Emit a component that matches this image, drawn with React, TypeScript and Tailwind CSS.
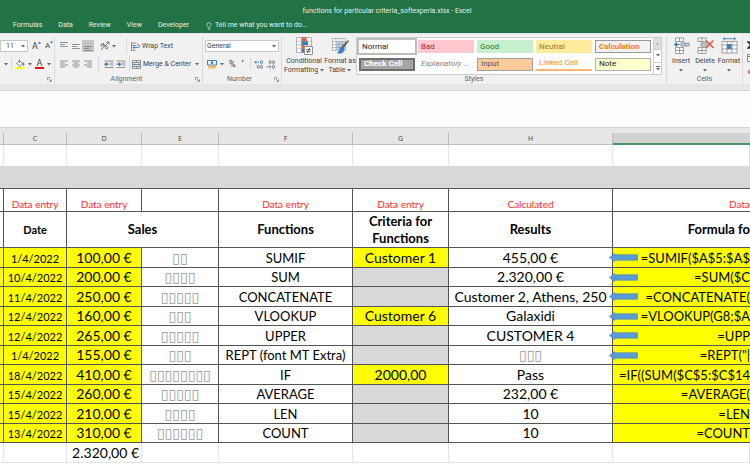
import type { ReactNode } from "react";
import clsx from "clsx";
import { Lightbulb } from "lucide-react";

interface Row {
    date: string;
    amount: string;
    bars: number;
    fn: string;
    criteria?: string;
    result: string;
    formula: string;
    arrow?: boolean;
}

const tabs = ["Formulas", "Data", "Review", "View", "Developer"];

const cellStyles = [
    { name: "Normal", className: "bg-white text-[#222] outline-2 outline-[#bdbdbd]" },
    { name: "Bad", className: "bg-[#ffc7ce] text-[#b3202c]" },
    { name: "Good", className: "bg-[#c6efce] text-[#2a7a2a]" },
    { name: "Neutral", className: "bg-[#ffeb9c] text-[#a5741a]" },
    { name: "Calculation", className: "bg-[#f2f2f2] text-[#fa7d00] font-bold border border-[#999]" },
    { name: "Check Cell", className: "bg-[#a5a5a5] text-white font-bold border-2 border-[#6e6e6e]" },
    { name: "Explanatory ...", className: "bg-white text-[#7f7f7f] italic" },
    { name: "Input", className: "bg-[#ffcc99] text-[#4f4f76] border border-[#a0a0a0]" },
    { name: "Linked Cell", className: "bg-white text-[#fa8d20] border-b-2 border-[#ffb571]" },
    { name: "Note", className: "bg-[#ffffcc] text-[#222] border border-[#b2b2b2]" },
];

const rows: Row[] = [
    { date: "1/4/2022", amount: "100,00 €", bars: 2, fn: "SUMIF", criteria: "Customer 1", result: "455,00 €", formula: "=SUMIF($A$5:$A$", arrow: true },
    { date: "10/4/2022", amount: "200,00 €", bars: 4, fn: "SUM", result: "2.320,00 €", formula: "=SUM($C", arrow: true },
    { date: "11/4/2022", amount: "250,00 €", bars: 5, fn: "CONCATENATE", result: "Customer 2, Athens, 250", formula: "=CONCATENATE(", arrow: true },
    { date: "12/4/2022", amount: "160,00 €", bars: 3, fn: "VLOOKUP", criteria: "Customer 6", result: "Galaxidi", formula: "=VLOOKUP(G8;$A", arrow: true },
    { date: "12/4/2022", amount: "265,00 €", bars: 5, fn: "UPPER", result: "CUSTOMER 4", formula: "=UPP", arrow: true },
    { date: "1/4/2022", amount: "155,00 €", bars: 3, fn: "REPT (font MT Extra)", result: "▯▯▯", formula: '=REPT("|', arrow: true },
    { date: "18/4/2022", amount: "410,00 €", bars: 8, fn: "IF", criteria: "2000,00", result: "Pass", formula: "=IF((SUM($C$5:$C$14" },
    { date: "15/4/2022", amount: "260,00 €", bars: 5, fn: "AVERAGE", result: "232,00 €", formula: "=AVERAGE(" },
    { date: "15/4/2022", amount: "210,00 €", bars: 4, fn: "LEN", result: "10", formula: "=LEN" },
    { date: "13/4/2022", amount: "310,00 €", bars: 6, fn: "COUNT", result: "10", formula: "=COUNT" },
];

const cell = "border-r border-b border-[#555] p-0 whitespace-nowrap";
const lastCell = "border-b border-[#555] p-0 text-right whitespace-nowrap";
const gridCell = "border-r border-b border-[#e4e4e4]";

function Caret() {
    return (
        <svg viewBox="0 0 4 3" className="h-[3px] w-1 shrink-0 fill-[#666]">
            <path d="M0 0h4L2 2.6z" />
        </svg>
    );
}

function Launcher() {
    return (
        <svg viewBox="0 0 6 6" className="h-[5px] w-[5px] fill-none stroke-[#777]" strokeWidth="0.9">
            <path d="M0.5 4V0.5H4M2.3 2.3l2.8 2.8M5.3 2.8v2.5H2.8" />
        </svg>
    );
}

function Lines({ widths, align = "left", top = 1 }: { widths: number[]; align?: "left" | "center" | "right"; top?: number }) {
    return (
        <svg viewBox="0 0 10 9" className="h-[9px] w-[10px] stroke-[#888]" strokeWidth="0.9">
            {widths.map((w, i) => {
                const x = align === "left" ? 1 : align === "center" ? 5 - w / 2 : 9 - w;
                return <path key={i} d={`M${x} ${top + i * 2}h${w}`} />;
            })}
        </svg>
    );
}

function Indent({ right }: { right?: boolean }) {
    return (
        <svg viewBox="0 0 10 9" className="h-[9px] w-[10px] fill-none stroke-[#888]" strokeWidth="0.9">
            <path d="M0.5 1h9M6 3h3.5M6 5h3.5M0.5 7.5h9" />
            <path d={right ? "M0.5 4.2h4M3 2.6l1.6 1.6L3 5.8" : "M1 4.2h4M2.6 2.6L1 4.2l1.6 1.6"} stroke="#2f75b5" strokeWidth="1.2" />
        </svg>
    );
}

function IconButton({ label, active, children }: { label: string; active?: boolean; children: ReactNode }) {
    return (
        <button
            aria-label={label}
            className={clsx("flex h-3 w-3 items-center justify-center", active && "bg-[#c5c5c5]")}
        >
            {children}
        </button>
    );
}

function Group({ label, launcher, className, children }: { label?: string; launcher?: boolean; className?: string; children?: ReactNode }) {
    return (
        <section className={clsx("flex flex-col border-r border-[#dadada]", className)}>
            <div className="flex-1">{children}</div>
            <div className="flex h-2 items-center pr-[2px] leading-[8px] text-[#666]">
                <span className="flex-1 text-center">{label}</span>
                {launcher && (
                    <button aria-label="More options">
                        <Launcher />
                    </button>
                )}
            </div>
        </section>
    );
}

function DecimalIcon({ more }: { more?: boolean }) {
    return (
        <svg viewBox="0 0 9 9" className="h-[9px] w-[9px] fill-none stroke-[#666]" strokeWidth="0.8">
            <ellipse cx="7.5" cy="2.2" rx="1" ry="1.6" stroke={more ? "#2f75b5" : "#666"} />
            <ellipse cx="7.5" cy="6.8" rx="1" ry="1.6" />
            {more ? (
                <>
                    <path d="M5.3 2.2H0.8M2.3 0.8L0.8 2.2l1.5 1.4" stroke="#2f75b5" />
                    <ellipse cx="4.2" cy="6.8" rx="1" ry="1.6" />
                </>
            ) : (
                <>
                    <ellipse cx="4.2" cy="2.2" rx="1" ry="1.6" />
                    <path d="M0.5 6.8H5M3.5 5.4L5 6.8 3.5 8.2" stroke="#2f75b5" />
                </>
            )}
        </svg>
    );
}

function Ribbon() {
    return (
        <div className="flex overflow-hidden border-t border-[#e3e3e3] bg-[#f1f1f1] pt-[3px] pb-px text-[7px] whitespace-nowrap text-[#444]">
            <Group launcher className="w-[55px] shrink-0">
                <div className="flex h-[18px] items-center gap-1">
                    <div className="relative flex h-3 w-[28px] items-center border border-[#c6c6c6] bg-white">
                        <select aria-label="Font size" className="w-full appearance-none pl-[5px] leading-[10px]">
                            <option>11</option>
                        </select>
                        <span className="pointer-events-none absolute right-[2px]">
                            <Caret />
                        </span>
                    </div>
                    <button aria-label="Increase font size" className="flex text-[9px] leading-[10px]">
                        A
                        <svg viewBox="0 0 4 3" className="h-[3px] w-[3px] fill-[#2f75b5]"><path d="M0 3h4L2 0z" /></svg>
                    </button>
                    <button aria-label="Decrease font size" className="flex text-[8px] leading-[10px]">
                        A
                        <svg viewBox="0 0 4 3" className="h-[3px] w-[3px] fill-[#2f75b5]"><path d="M0 0h4L2 3z" /></svg>
                    </button>
                </div>
                <div className="flex h-[18px] items-center gap-[3px] pl-1">
                    <Caret />
                    <span className="h-3 w-px bg-[#dadada]" />
                    <button aria-label="Fill color">
                        <svg viewBox="0 0 10 10" className="h-[10px] w-[10px]">
                            <path d="M4.5 0.5v3M1.5 4.5l3-2.8 3.2 3-3 2.6z" fill="#fff" stroke="#666" strokeWidth="0.8" />
                            <path d="M8 3.5c1 1 1.4 2 .8 3-.8-.4-1-1.4-.8-3z" fill="#2f75b5" stroke="#2f75b5" strokeWidth="0.4" />
                            <path d="M0.5 8h9v2h-9z" fill="#ffff00" />
                        </svg>
                    </button>
                    <Caret />
                    <button aria-label="Font color" className="flex w-[9px] flex-col items-center border-b-2 border-[#e81010] text-[9px] leading-[8px]">
                        A
                    </button>
                    <Caret />
                </div>
            </Group>

            <Group label="Alignment" launcher className="w-[148px] shrink-0 pl-[3px]">
                <div className="flex h-[18px] items-center">
                    <IconButton label="Top align"><Lines widths={[8, 5, 8]} top={0.5} /></IconButton>
                    <IconButton label="Middle align"><Lines widths={[8, 5, 8]} top={2.5} /></IconButton>
                    <IconButton label="Bottom align" active><Lines widths={[8, 5, 8]} top={4.5} /></IconButton>
                    <button aria-label="Orientation" className="ml-[6px] flex items-center gap-[2px]">
                        <svg viewBox="0 0 10 10" className="h-[10px] w-[10px] fill-none stroke-[#666]" strokeWidth="0.9">
                            <path d="M1 9L9 1M6.5 1H9v2.5M1 4a1.3 1.3 0 1 0 2.6 0 1.3 1.3 0 1 0-2.6 0M3.2 2.2l1.6 2.6M5.4 6.6a1.2 1.2 0 1 0 2.4 0 1.2 1.2 0 1 0-2.4 0" />
                        </svg>
                        <Caret />
                    </button>
                    <span className="ml-[10px] h-4 w-px bg-[#dadada]" />
                    <button className="ml-1 flex items-center gap-[2px]">
                        <svg viewBox="0 0 9 9" className="h-[9px] w-[9px] fill-none stroke-[#777]" strokeWidth="0.8">
                            <path d="M0.5 0v9M0.5 1h5M0.5 3.5h5M0.5 8.3h4" />
                            <path d="M2 5.5h5.2a1.4 1.4 0 0 0 0-2.8H6M3.5 4L2 5.5 3.5 7" stroke="#2f75b5" />
                        </svg>
                        Wrap Text
                    </button>
                </div>
                <div className="flex h-[18px] items-center">
                    <IconButton label="Align left"><Lines widths={[8, 5, 8, 5]} /></IconButton>
                    <IconButton label="Center"><Lines widths={[8, 5, 8, 5]} align="center" /></IconButton>
                    <IconButton label="Align right"><Lines widths={[8, 5, 8, 5]} align="right" /></IconButton>
                    <span className="mx-1 h-4 w-px bg-[#dadada]" />
                    <IconButton label="Decrease indent"><Indent /></IconButton>
                    <IconButton label="Increase indent"><Indent right /></IconButton>
                    <span className="ml-[2px] h-4 w-px bg-[#dadada]" />
                    <button className="ml-[2px] flex items-center gap-[2px]">
                        <svg viewBox="0 0 9 9" className="h-[9px] w-[9px] fill-none stroke-[#777]" strokeWidth="0.8">
                            <path d="M0.5 0.5h8v8h-8zM0.5 2.5h8M0.5 6.5h8M4.5 0.5v2M4.5 6.5v2" />
                            <path d="M1.5 4.5h6M2.6 3.6l-1 .9 1 .9M6.4 3.6l1 .9-1 .9" stroke="#2f75b5" />
                        </svg>
                        Merge & Center
                        <span className="ml-[2px]"><Caret /></span>
                    </button>
                </div>
            </Group>

            <Group label="Number" launcher className="w-[79px] shrink-0 pl-[2px]">
                <div className="flex h-[18px] items-center">
                    <div className="relative flex h-3 w-[74px] items-center border border-[#c6c6c6] bg-white">
                        <select aria-label="Number format" className="w-full appearance-none pl-px leading-[10px]">
                            <option>General</option>
                        </select>
                        <span className="pointer-events-none absolute right-[2px]">
                            <Caret />
                        </span>
                    </div>
                </div>
                <div className="flex h-[18px] items-center pl-[2px]">
                    <button aria-label="Accounting format" className="flex items-center gap-[3px]">
                        <svg viewBox="0 0 10 9" className="h-[9px] w-[10px]">
                            <path d="M0.5 0.5h9v4.5h-9z" fill="#e8f1fa" stroke="#2f75b5" strokeWidth="0.9" />
                            <circle cx="5" cy="2.7" r="1.2" fill="#2f75b5" />
                            <path d="M4 5h4v3.5H4z" fill="#f4b96a" />
                            <path d="M1 6.3h3M1 8h3M5 6.3h4" stroke="#d58a2a" strokeWidth="0.7" />
                        </svg>
                        <Caret />
                    </button>
                    <button aria-label="Percent style" className="ml-[5px] text-[9px] leading-[10px]">%</button>
                    <button aria-label="Comma style" className="ml-[6px] text-[9px] leading-[10px] font-bold">’</button>
                    <span className="ml-[6px] h-3 w-px bg-[#dadada]" />
                    <button aria-label="Increase decimal" className="ml-[3px]"><DecimalIcon more /></button>
                    <button aria-label="Decrease decimal" className="ml-[3px]"><DecimalIcon /></button>
                </div>
            </Group>

            <Group label="Styles" className="min-w-0 flex-1 pl-[2px]">
                <div className="flex">
                    <button className="flex w-10 shrink-0 flex-col items-center leading-[9px]">
                        <svg viewBox="0 0 17 18" className="mb-[2px] h-[18px] w-[17px]">
                            <path d="M0.5 0.5h15v15h-15z" fill="#fff" stroke="#999" strokeWidth="0.7" />
                            <path d="M0.5 4.2h15M0.5 8h15M0.5 11.8h15M5.5 0.5v15M10.5 0.5v15" stroke="#aaa" strokeWidth="0.7" />
                            <path d="M5.5 0.5h5v3.7h-5zM5.5 8h3v3.8h-3z" fill="#e0603f" />
                            <path d="M5.5 4.2h6.5V8H5.5zM5.5 11.8h2.5v3.7H5.5z" fill="#3e7fc1" />
                            <path d="M8.5 9.5h8v8h-8z" fill="#fff" stroke="#777" strokeWidth="0.8" />
                            <path d="M10.3 12.5h4.4M10.3 14.6h4.4M13.8 11l-2.6 5" stroke="#444" strokeWidth="0.8" />
                        </svg>
                        <span>Conditional</span>
                        <span className="flex items-center gap-[2px]">Formatting <Caret /></span>
                    </button>
                    <button className="flex w-8 shrink-0 flex-col items-center leading-[9px]">
                        <svg viewBox="0 0 17 18" className="mb-[2px] h-[18px] w-[17px]">
                            <path d="M0.5 1.5h13v12h-13z" fill="#fff" stroke="#999" strokeWidth="0.7" />
                            <path d="M4 4.5h9.5v9H4z" fill="#b9d3ec" />
                            <path d="M0.5 4.5h13M0.5 7.5h13M0.5 10.5h13M4 1.5v12M7.2 1.5v12M10.4 1.5v12" stroke="#999" strokeWidth="0.6" />
                            <path d="M16.5 4l-5 6.5-1.3-1L16 3.6z" fill="#555" stroke="#555" strokeWidth="0.8" />
                            <path d="M10 9.5c-2.5 0-2 4.5-5 6.5 3 1.5 7.5.5 7.3-4.5z" fill="#3e7fc1" />
                        </svg>
                        <span>Format as</span>
                        <span className="flex items-center gap-[2px]">Table <Caret /></span>
                    </button>
                    <div className="flex min-w-0 flex-1 border border-[#cdcdcd] bg-white">
                        <div className="grid flex-1 grid-cols-5 gap-[3px] p-[2px] text-[8px]">
                            {cellStyles.map((style) => (
                                <button
                                    key={style.name}
                                    className={clsx("flex h-[13px] items-center overflow-hidden pl-[3px] leading-[10px]", style.className)}
                                >
                                    {style.name}
                                </button>
                            ))}
                        </div>
                        <div className="flex w-2 flex-col divide-y divide-[#cdcdcd] border-l border-[#cdcdcd]">
                            <button aria-label="Scroll up" className="flex flex-1 items-center justify-center bg-[#dedede]">
                                <svg viewBox="0 0 4 3" className="h-[2px] w-[3px] fill-[#aaa]"><path d="M0 3h4L2 0z" /></svg>
                            </button>
                            <button aria-label="Scroll down" className="flex flex-1 items-center justify-center"><Caret /></button>
                            <button aria-label="More styles" className="flex flex-1 flex-col items-center justify-center gap-px">
                                <span className="h-px w-1 bg-[#666]" />
                                <Caret />
                            </button>
                        </div>
                    </div>
                    <span className="w-1" />
                </div>
            </Group>

            <Group label="Cells" className="w-[76px] shrink-0 pl-[2px]">
                <div className="flex">
                    <button className="flex w-6 flex-col items-center leading-[9px]">
                        <svg viewBox="0 0 17 18" className="mb-[2px] h-[18px] w-[17px] fill-white stroke-[#888]" strokeWidth="0.8">
                            <path d="M2.5 1h8v3.5h-8zM6.5 1v3.5M2.5 10.5h8v6h-8zM6.5 10.5v6M2.5 13.5h8" />
                            <path d="M8 6h8v3H8zM12 6v3" fill="#b9d3ec" />
                            <path d="M6.5 7.5H2M4 5.5l-2.2 2L4 9.5" fill="none" stroke="#2f75b5" strokeWidth="1.2" />
                        </svg>
                        <span>Insert</span>
                        <span className="flex h-[9px] items-center"><Caret /></span>
                    </button>
                    <button className="flex w-6 flex-col items-center leading-[9px]">
                        <svg viewBox="0 0 17 18" className="mb-[2px] h-[18px] w-[17px] fill-white stroke-[#888]" strokeWidth="0.8">
                            <path d="M1 1h8v3.5H1zM5 1v3.5M1 10.5h8v6H1zM5 10.5v6M1 13.5h8" />
                            <path d="M4 6h6v3H4z" fill="#b9d3ec" />
                            <path d="M9 3.5l7.5 7.5M16.5 3.5L9 11" fill="none" stroke="#e0533a" strokeWidth="1.5" />
                        </svg>
                        <span>Delete</span>
                        <span className="flex h-[9px] items-center"><Caret /></span>
                    </button>
                    <button className="flex w-6 flex-col items-center leading-[9px]">
                        <svg viewBox="0 0 17 18" className="mb-[2px] h-[18px] w-[17px] fill-white stroke-[#888]" strokeWidth="0.8">
                            <path d="M1 4.5h15v11.5H1zM1 8h15M1 12h15M6 4.5V16M11 4.5V16" />
                            <path d="M6 7h4.5v5H6z" fill="#3e7fc1" stroke="none" />
                            <path d="M2.5 1.7h12M4 0.3L2.5 1.7 4 3.1M13 0.3l1.5 1.4L13 3.1" fill="none" stroke="#2f75b5" />
                        </svg>
                        <span>Format</span>
                        <span className="flex h-[9px] items-center"><Caret /></span>
                    </button>
                </div>
            </Group>

            <div className="flex w-[7px] shrink-0 flex-col gap-[5px] overflow-hidden pt-1 pl-1">
                <button aria-label="AutoSum">
                    <svg viewBox="0 0 8 8" className="h-2 w-2 max-w-none fill-none stroke-[#333]" strokeWidth="1.4">
                        <path d="M7 1H1l3 3-3 3h6" />
                    </svg>
                </button>
                <button aria-label="Fill">
                    <svg viewBox="0 0 8 8" className="h-2 w-2 max-w-none fill-white stroke-[#888]">
                        <path d="M0.5 0.5h7v7h-7zM0.5 2.5h7" />
                    </svg>
                </button>
                <button aria-label="Clear">
                    <svg viewBox="0 0 8 8" className="h-2 w-2 max-w-none fill-[#e5739a]">
                        <path d="M0 5l4-4 4 2-4 4H2z" />
                    </svg>
                </button>
            </div>
        </div>
    );
}

function Arrow() {
    return (
        <svg viewBox="0 0 29 9" className="absolute top-[5px] -left-1 h-[9px] w-[29px]">
            <path d="M0.5 4.5L5.5 0.5V1.8h23v5.4h-23v1.3z" fill="#5b9bd5" stroke="#4f87bd" strokeWidth="0.7" />
        </svg>
    );
}

function Sheet() {
    return (
        <table className="w-full table-fixed border-separate border-spacing-0 bg-white text-center font-[Lato,sans-serif] text-[14px] leading-[18px] text-black">
            <colgroup>
                <col className="w-1" />
                <col className="w-[63px]" />
                <col className="w-[75px]" />
                <col className="w-[77px]" />
                <col className="w-[134px]" />
                <col className="w-[96px]" />
                <col className="w-[164px]" />
                <col />
            </colgroup>
            <thead>
                <tr className="h-3 bg-[#e6e6e6] font-['Open_Sans',sans-serif] text-[7px] leading-[10px] text-[#444]">
                    {["", "C", "D", "E", "F", "G", "H"].map((letter, i) => (
                        <th key={i} className="border-r border-b border-[#bcbcbc] p-0 font-normal">{letter}</th>
                    ))}
                    <th aria-label="I" className="border-b-2 border-[#4b9470] bg-[#d2d2d2] p-0" />
                </tr>
            </thead>
            <tbody>
                <tr className="h-[21px]">
                    {Array.from({ length: 8 }, (_, i) => (
                        <td key={i} className="border-r border-[#e4e4e4] p-0" />
                    ))}
                </tr>
                <tr className="h-[23px]">
                    <td colSpan={8} className="border-b border-[#555] bg-[#d9d9d9] p-0" />
                </tr>
                <tr className="h-[23px] align-bottom text-[10px] leading-[13px] text-[#ff2a2a]">
                    <td className={cell} />
                    <td className={cell}>Data entry</td>
                    <td className={cell}>Data entry</td>
                    <td className={cell} />
                    <td className={cell}>Data entry</td>
                    <td className={cell}>Data entry</td>
                    <td className={cell}>Calculated</td>
                    <td className={lastCell}>Data</td>
                </tr>
                <tr className="h-[36px] text-[13px] leading-[17px]">
                    <th className={cell} />
                    <th className={clsx(cell, "text-[11px]")}>Date</th>
                    <th colSpan={2} className={cell}>Sales</th>
                    <th className={cell}>Functions</th>
                    <th className={cell}>Criteria for<br />Functions</th>
                    <th className={cell}>Results</th>
                    <th className={lastCell}>Formula fo</th>
                </tr>
                {rows.map((row) => (
                    <tr key={row.fn} className="odd:h-5 even:h-[19px]">
                        <td className={clsx(cell, "bg-[#ffff00]")} />
                        <td className={clsx(cell, "bg-[#ffff00] align-bottom text-[11px] leading-[16px]")}>{row.date}</td>
                        <td className={clsx(cell, "bg-[#ffff00]")}>{row.amount}</td>
                        <td className={clsx(cell, "font-['DejaVu_Sans',sans-serif] text-[#999]")}>{"▯".repeat(row.bars)}</td>
                        <td className={clsx(cell, "text-[13px]")}>{row.fn}</td>
                        <td className={clsx(cell, row.criteria ? "bg-[#ffff00]" : "bg-[#d9d9d9]")}>{row.criteria}</td>
                        <td className={clsx(cell, row.result.startsWith("▯") && "font-['DejaVu_Sans',sans-serif] text-[#999]")}>{row.result}</td>
                        <td className={clsx(lastCell, "relative bg-[#ffff00] text-[13px]")}>
                            {row.arrow && <Arrow />}
                            {row.formula}
                        </td>
                    </tr>
                ))}
                <tr className="h-5">
                    <td className={gridCell} />
                    <td className={gridCell} />
                    <td className={clsx(gridCell, "p-0 pr-[2px] text-right whitespace-nowrap")}>2.320,00 €</td>
                    {Array.from({ length: 5 }, (_, i) => (
                        <td key={i} className={gridCell} />
                    ))}
                </tr>
            </tbody>
        </table>
    );
}

export default function App() {
    return (
        <div className="min-h-screen overflow-hidden bg-white font-[Roboto,sans-serif]">
            <header className="bg-[#217346] text-[7px] text-[#e4f0e9]">
                <h1 className="pt-1 pl-6 text-center leading-[14px]">functions for particular criteria_softexperia.xlsx - Excel</h1>
                <nav className="flex h-[15px] items-center gap-4 pl-[13px]">
                    {tabs.map((tab) => (
                        <a key={tab} href="#">{tab}</a>
                    ))}
                    <button className="flex items-center gap-[2px]">
                        <Lightbulb className="h-2 w-2" />
                        Tell me what you want to do...
                    </button>
                </nav>
            </header>
            <Ribbon />
            <div className="h-[7px] border-b border-[#d4d4d4] bg-[#e6e6e6]" />
            <input aria-label="Formula bar" className="block h-[36px] w-full bg-[#fdfdfd]" />
            <div className="h-[6px] border-t border-[#d4d4d4] bg-[#e6e6e6]" />
            <Sheet />
        </div>
    );
}
